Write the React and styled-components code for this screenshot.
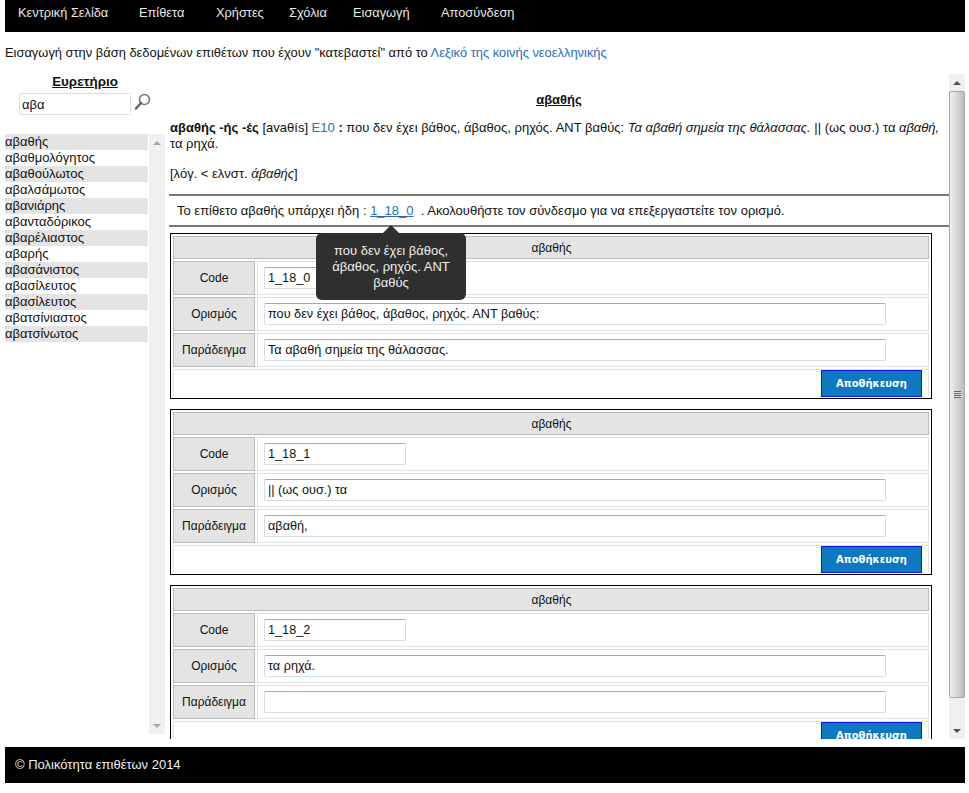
import React from 'react';
import styled, { createGlobalStyle } from 'styled-components';

const GlobalStyle = createGlobalStyle`
    html, body {
        margin: 0;
        padding: 0;
        background: #fff;
        overflow: hidden;
    }
    body {
        font-family: "Liberation Sans", Arial, sans-serif;
        font-size: 13px;
        color: #111;
    }
`;

const MENU = [
    { label: 'Κεντρική Σελίδα', width: 121 },
    { label: 'Επίθετα', width: 77 },
    { label: 'Χρήστες', width: 73 },
    { label: 'Σχόλια', width: 64 },
    { label: 'Εισαγωγή', width: 88 },
    { label: 'Αποσύνδεση', width: 90 },
];

const WORDS = [
    'αβαθής', 'αβαθμολόγητος', 'αβαθούλωτος', 'αβαλσάμωτος', 'αβανιάρης', 'αβανταδόρικος',
    'αβαρέλιαστος', 'αβαρής', 'αβασάνιστος', 'αβασίλευτος', 'αβασίλευτος', 'αβατσίνιαστος', 'αβατσίνωτος',
];

const ENTRIES = [
    { code: '1_18_0', def: 'που δεν έχει βάθος, άβαθος, ρηχός. ΑΝΤ βαθύς:', example: 'Τα αβαθή σημεία της θάλασσας.' },
    { code: '1_18_1', def: '|| (ως ουσ.) τα', example: 'αβαθή,' },
    { code: '1_18_2', def: 'τα ρηχά.', example: '' },
];

const Scrollbar = ({ thumb }) => (
    <Track>
        <Arrow><UpTriangle $muted={!thumb} /></Arrow>
        {thumb ? <Thumb><Grip /></Thumb> : <Rail />}
        <Arrow><DownTriangle $muted={!thumb} /></Arrow>
    </Track>
);

const Entry = ({ code, def, example }) => (
    <Card>
        <CardTitle>αβαθής</CardTitle>
        <Row>
            <Label>Code</Label>
            <Field><CodeInput readOnly value={code} /></Field>
        </Row>
        <Row>
            <Label>Ορισμός</Label>
            <Field><WideInput readOnly value={def} /></Field>
        </Row>
        <Row>
            <Label>Παράδειγμα</Label>
            <Field><WideInput readOnly value={example} /></Field>
        </Row>
        <ButtonRow>
            <SaveButton>Αποθήκευση</SaveButton>
        </ButtonRow>
    </Card>
);

const App = () => {
    return (
        <Page>
            <GlobalStyle />
            <Header>
                {MENU.map((item) => (
                    <MenuItem key={item.label} $width={item.width}>{item.label}</MenuItem>
                ))}
            </Header>
            <Intro>
                Εισαγωγή στην βάση δεδομένων επιθέτων που έχουν "κατεβαστεί" από το <BlueLink>Λεξικό της κοινής νεοελληνικής</BlueLink>
            </Intro>
            <Columns>
                <Sidebar>
                    <IndexTitle>Ευρετήριο</IndexTitle>
                    <SearchRow>
                        <SearchInput readOnly value="αβα" />
                        <svg width="18" height="18" viewBox="0 0 18 18">
                            <circle cx="10.5" cy="6.5" r="5" fill="#fff" stroke="#777" strokeWidth="1.6" />
                            <path d="M7 10 L2 15.5" stroke="#666" strokeWidth="2.6" strokeLinecap="round" />
                        </svg>
                    </SearchRow>
                    <ListArea>
                        <WordList>
                            {WORDS.map((word, i) => (
                                <Word key={i}>{word}</Word>
                            ))}
                        </WordList>
                        <Scrollbar />
                    </ListArea>
                </Sidebar>
                <Main>
                    <MainScroll>
                        <WordHeading>αβαθής</WordHeading>
                        <Lemma>
                            <b>αβαθής -ής -ές</b> [avaθís] <BlueLink>Ε10</BlueLink> <b>:</b> που δεν έχει βάθος, άβαθος, ρηχός. ΑΝΤ βαθύς: <i>Τα αβαθή σημεία της θάλασσας.</i> || (ως ουσ.) τα <i>αβαθή,</i> τα ρηχά.
                        </Lemma>
                        <Etymology>[λόγ. &lt; ελνστ. <i>άβαθής</i>]</Etymology>
                        <Notice>
                            Το επίθετο αβαθής υπάρχει ήδη : <CodeLink>1_18_0</CodeLink>&nbsp; . Ακολουθήστε τον σύνδεσμο για να επεξεργαστείτε τον ορισμό.
                            <Tooltip>που δεν έχει βάθος, άβαθος, ρηχός. ΑΝΤ βαθύς</Tooltip>
                        </Notice>
                        {ENTRIES.map((entry) => (
                            <Entry key={entry.code} {...entry} />
                        ))}
                    </MainScroll>
                    <Scrollbar thumb />
                </Main>
            </Columns>
            <Footer>© Πολικότητα επιθέτων 2014</Footer>
        </Page>
    );
};

const Page = styled.div`
    height: 793px;
    padding: 0 4px 0 5px;
    box-sizing: border-box;
`;

const Header = styled.div`
    height: 32px;
    background: #000;
    display: flex;
    padding-left: 13px;
`;

const MenuItem = styled.a`
    width: ${(props) => props.$width}px;
    flex: none;
    color: #e8e8e8;
    font-size: 12.8px;
    line-height: 26px;
`;

const Intro = styled.div`
    height: 42px;
    padding-top: 13px;
    box-sizing: border-box;
    line-height: 16px;
    font-size: 12.9px;
`;

const BlueLink = styled.span`
    color: #2a6db5;
`;

const Columns = styled.div`
    display: flex;
    height: 673px;
`;

const Sidebar = styled.div`
    width: 160px;
    flex: none;
    margin-right: 4px;
`;

const IndexTitle = styled.div`
    font-weight: bold;
    text-decoration: underline;
    text-align: center;
    font-size: 13.4px;
    line-height: 16px;
`;

const SearchRow = styled.div`
    display: flex;
    align-items: flex-start;
    gap: 3px;
    margin-top: 3px;
    padding-left: 14px;
`;

const SearchInput = styled.input`
    width: 112px;
    height: 22px;
    box-sizing: border-box;
    border: 1px solid #d5dde6;
    border-radius: 2px;
    padding: 0 2px;
    font: 13px "Liberation Sans", Arial, sans-serif;
    color: #111;
    outline: none;
`;

const ListArea = styled.div`
    display: flex;
    gap: 1px;
    height: 600px;
    margin-top: 19px;
`;

const WordList = styled.div`
    flex: 1;
`;

const Word = styled.div`
    height: 16px;
    line-height: 16px;
    font-size: 13px;
    &:nth-child(odd) { background: #e4e4e4; }
`;

const Track = styled.div`
    width: 16px;
    flex: none;
    display: flex;
    flex-direction: column;
    background: #f0f0f0;
    height: 100%;
`;

const Arrow = styled.div`
    height: 17px;
    flex: none;
    display: flex;
    align-items: center;
    justify-content: center;
`;

const UpTriangle = styled.div`
    border-left: 4px solid transparent;
    border-right: 4px solid transparent;
    border-bottom: 4px solid ${(props) => (props.$muted ? '#a6a6a6' : '#505050')};
`;

const DownTriangle = styled.div`
    border-left: 4px solid transparent;
    border-right: 4px solid transparent;
    border-top: 4px solid ${(props) => (props.$muted ? '#a6a6a6' : '#505050')};
`;

const Rail = styled.div`
    flex: 1;
`;

const Thumb = styled.div`
    flex: 1;
    margin-bottom: 24px;
    border: 1px solid #a8a8a8;
    border-radius: 2px;
    background: linear-gradient(to right, #f2f2f2, #d8d8d8 45%, #bcbcbc);
    display: flex;
    align-items: center;
    justify-content: center;
`;

const Grip = styled.div`
    width: 7px;
    height: 7px;
    background: repeating-linear-gradient(to bottom, #666 0, #666 1px, #ddd 1px, #ddd 2px);
`;

const Main = styled.div`
    flex: 1;
    display: flex;
    min-width: 0;
    height: 665px;
`;

const MainScroll = styled.div`
    position: relative;
    width: 780px;
    flex: none;
    height: 665px;
    overflow: hidden;
`;

const WordHeading = styled.div`
    font-weight: bold;
    text-decoration: underline;
    text-align: center;
    line-height: 16px;
    font-size: 13px;
    padding-top: 18px;
`;

const Lemma = styled.div`
    font-size: 13px;
    line-height: 16px;
    margin-top: 12px;
    padding-left: 1px;
    padding-right: 6px;
`;

const Etymology = styled.div`
    font-size: 13px;
    line-height: 16px;
    margin-top: 14px;
    padding-left: 1px;
`;

const Notice = styled.div`
    position: relative;
    margin-top: 12px;
    border-top: 2px solid #777;
    border-bottom: 2px solid #777;
    height: 29px;
    line-height: 30px;
    padding-left: 8px;
    font-size: 13px;
`;

const CodeLink = styled.span`
    color: #2a6db5;
    text-decoration: underline;
`;

const Tooltip = styled.div`
    position: absolute;
    z-index: 2;
    left: 147px;
    top: 37px;
    width: 150px;
    height: 67px;
    box-sizing: border-box;
    padding: 10px 8px;
    background: #2f2f2f;
    border-radius: 6px;
    color: #eee;
    font-size: 13px;
    line-height: 16px;
    text-align: center;
    &::before {
        content: '';
        position: absolute;
        left: 67px;
        top: -8px;
        border-left: 8px solid transparent;
        border-right: 8px solid transparent;
        border-bottom: 8px solid #2f2f2f;
    }
`;

const Card = styled.div`
    margin: 6px 17px 10px 1px;
    border: 1px solid #000;
    padding: 2px;
    height: 160px;
    display: flex;
    flex-direction: column;
    gap: 2px;
`;

const CardTitle = styled.div`
    height: 21px;
    line-height: 23px;
    background: #e4e4e4;
    border: 1px solid #bbb;
    text-align: center;
    font-size: 12px;
    padding-left: 1px;
`;

const Row = styled.div`
    display: flex;
    gap: 2px;
    height: 34px;
`;

const Label = styled.div`
    width: 80px;
    flex: none;
    background: #e4e4e4;
    border: 1px solid #bbb;
    text-align: center;
    line-height: 32px;
    font-size: 12px;
`;

const Field = styled.div`
    flex: 1;
    border: 1px solid #e0e0e0;
    display: flex;
    align-items: center;
    padding-left: 6px;
`;

const CodeInput = styled.input`
    width: 142px;
    height: 22px;
    box-sizing: border-box;
    border: 1px solid #d5dde6;
    border-top-color: #aaa;
    border-radius: 2px;
    padding: 0 3px;
    font: 12.7px "Liberation Sans", Arial, sans-serif;
    color: #111;
    outline: none;
`;

const WideInput = styled(CodeInput)`
    width: 622px;
`;

const ButtonRow = styled.div`
    height: 26px;
    flex: none;
    border: 1px solid #e0e0e0;
    border-bottom: 0;
    display: flex;
    justify-content: flex-end;
    align-items: flex-start;
    padding: 0 6px 0 0;
`;

const SaveButton = styled.button`
    width: 101px;
    height: 27px;
    flex: none;
    background: #0e78c0;
    border: 1px solid #1414e6;
    color: #fff;
    font: bold 10px "DejaVu Sans", sans-serif;
    padding: 0;
`;

const Footer = styled.div`
    height: 36px;
    background: #000;
    color: #f0f0f0;
    line-height: 36px;
    padding-left: 10px;
    font-size: 13px;
`;

export default App;
